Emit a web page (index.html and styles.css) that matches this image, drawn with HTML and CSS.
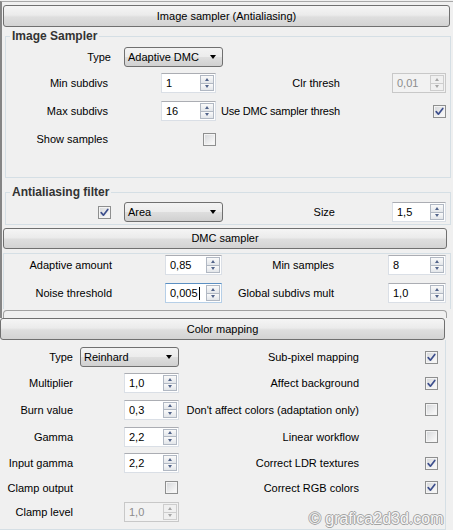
FILE: index.html
```html
<!DOCTYPE html>
<html>
<head>
<meta charset="utf-8">
<title>V-Ray rollouts</title>
<link rel="stylesheet" href="styles.css">
</head>
<body>
<div class="main">
  <div class="hdr h1">Image sampler (Antialiasing)</div>

  <fieldset class="grp g1">
    <legend>Image Sampler</legend>
    <div class="trow">
      <span class="tl">Type</span>
      <div class="dd"><span>Adaptive DMC</span><i class="dda"></i></div>
    </div>
    <div class="isgrid">
      <span class="la">Min subdivs</span>
      <div class="spin"><span class="v">1</span><span class="arr"><b class="up"></b><b class="dn"></b></span></div>
      <span class="lb">Clr thresh</span>
      <div class="spin dis"><span class="v">0,01</span><span class="arr"><b class="up"></b><b class="dn"></b></span></div>

      <span class="la">Max subdivs</span>
      <div class="spin"><span class="v">16</span><span class="arr"><b class="up"></b><b class="dn"></b></span></div>
      <span class="lb tight">Use DMC sampler thresh</span>
      <span class="cb on end"><svg viewBox="0 0 11 11"><path d="M2.2 5.6 L4.4 8.2 L8.8 2.4"/></svg></span>

      <span class="la">Show samples</span>
      <span class="cb end"></span>
    </div>
  </fieldset>

  <fieldset class="grp g2">
    <legend>Antialiasing filter</legend>
    <div class="aarow">
      <span class="cb on aacb"><svg viewBox="0 0 11 11"><path d="M2.2 5.6 L4.4 8.2 L8.8 2.4"/></svg></span>
      <div class="dd aadd"><span>Area</span><i class="dda"></i></div>
      <span class="aasz">Size</span>
      <div class="spin aasp"><span class="v">1,5</span><span class="arr"><b class="up"></b><b class="dn"></b></span></div>
    </div>
  </fieldset>

  <div class="hdr h2">DMC sampler</div>
  <div class="dmc">
    <div class="dgrid">
      <span class="la">Adaptive amount</span>
      <div class="spin"><span class="v">0,85</span><span class="arr"><b class="up"></b><b class="dn"></b></span></div>
      <span class="lb">Min samples</span>
      <div class="spin"><span class="v">8</span><span class="arr"><b class="up"></b><b class="dn"></b></span></div>

      <span class="la">Noise threshold</span>
      <div class="spin foc"><span class="v">0,005<i class="caret"></i></span><span class="arr"><b class="up"></b><b class="dn"></b></span></div>
      <span class="lb">Global subdivs mult</span>
      <div class="spin"><span class="v">1,0</span><span class="arr"><b class="up"></b><b class="dn"></b></span></div>
    </div>
  </div>
  <div class="edge"></div>
</div>

<div class="hdr h4">Color mapping</div>
<div class="cmp">
  <div class="cgrid">
    <span class="la">Type</span>
    <div class="dd"><span>Reinhard</span><i class="dda"></i></div>
    <span class="lb">Sub-pixel mapping</span>
    <span class="cb on"><svg viewBox="0 0 11 11"><path d="M2.2 5.6 L4.4 8.2 L8.8 2.4"/></svg></span>

    <span class="la">Multiplier</span>
    <div class="spin end"><span class="v">1,0</span><span class="arr"><b class="up"></b><b class="dn"></b></span></div>
    <span class="lb">Affect background</span>
    <span class="cb on"><svg viewBox="0 0 11 11"><path d="M2.2 5.6 L4.4 8.2 L8.8 2.4"/></svg></span>

    <span class="la">Burn value</span>
    <div class="spin end"><span class="v">0,3</span><span class="arr"><b class="up"></b><b class="dn"></b></span></div>
    <span class="lb">Don't affect colors (adaptation only)</span>
    <span class="cb"></span>

    <span class="la">Gamma</span>
    <div class="spin end"><span class="v">2,2</span><span class="arr"><b class="up"></b><b class="dn"></b></span></div>
    <span class="lb">Linear workflow</span>
    <span class="cb"></span>

    <span class="la">Input gamma</span>
    <div class="spin end"><span class="v">2,2</span><span class="arr"><b class="up"></b><b class="dn"></b></span></div>
    <span class="lb">Correct LDR textures</span>
    <span class="cb on"><svg viewBox="0 0 11 11"><path d="M2.2 5.6 L4.4 8.2 L8.8 2.4"/></svg></span>

    <span class="la">Clamp output</span>
    <span class="cb end cbm"></span>
    <span class="lb">Correct RGB colors</span>
    <span class="cb on"><svg viewBox="0 0 11 11"><path d="M2.2 5.6 L4.4 8.2 L8.8 2.4"/></svg></span>

    <span class="la">Clamp level</span>
    <div class="spin dis end"><span class="v">1,0</span><span class="arr"><b class="up"></b><b class="dn"></b></span></div>
  </div>
</div>
<div class="wm">© grafica2d3d.com</div>
</body>
</html>
```

FILE: styles.css
```css
* { box-sizing: border-box; }
html, body { margin: 0; padding: 0; background: #f0f0f0; }
body {
  font-family: "Liberation Sans", Arial, sans-serif;
  font-size: 11px;
  color: #000;
  width: 453px;
  height: 530px;
  overflow: hidden;
}

.main {
  border-left: 2px solid #858585;
  border-top: 1px solid #a8a8a8;
  margin-top: 1px;
  padding-top: 3px;
}

.hdr {
  height: 22px;
  border: 1px solid #707070;
  border-radius: 3px;
  background: linear-gradient(#f5f5f5, #ebebeb 45%, #dedede 55%, #d3d3d3);
  text-align: center;
  line-height: 20px;
  white-space: nowrap;
}
.h1 { margin-left: 1px; width: 447px; }
.h2 { margin: 3px 0 0 1px; width: 444px; height: 21px; line-height: 19px; }
.h4 { width: 445px; }

.grp {
  margin: 0 0 0 3px;
  padding: 0;
  width: 446px;
  min-width: 0;
  border: 1px solid #d5dfe5;
}
.grp legend {
  margin-left: 4px;
  padding: 0 2px;
  font-weight: bold;
  font-size: 12px;
  line-height: 13px;
  color: #333;
}
.g1 { margin-top: 3px; }
.g2 { margin-top: 8px; }

.trow {
  display: flex;
  align-items: center;
  height: 20px;
  margin-top: 4px;
}
.tl { width: 105px; text-align: right; margin-right: 13px; }

.isgrid {
  display: grid;
  grid-template-columns: 155px 55px 176px 54px;
  grid-template-rows: 20px 20px 20px;
  row-gap: 8px;
  align-items: center;
  margin: 6px 0 28px 0;
}
.isgrid .la { text-align: right; padding-right: 53px; white-space: nowrap; }
.isgrid .lb { text-align: right; padding-right: 52px; white-space: nowrap; }
.tight { letter-spacing: -0.2px; }

.aarow {
  display: flex;
  align-items: center;
  height: 20px;
  margin: 3px 0 2px 0;
}
.aacb { margin-left: 92px; }
.aadd { margin-left: 13px; }
.aasz { width: 112px; text-align: right; }
.aasp { margin-left: 57px; width: 54px; }

.dmc {
  margin: 4px 0 0 1px;
  width: 448px;
  border: 1px solid #d5dfe5;
  border-bottom: none;
  padding: 1px 0 6px 0;
}
.dgrid {
  display: grid;
  grid-template-columns: 161px 57px 166px 58px;
  grid-template-rows: 20px 20px;
  row-gap: 8px;
  align-items: center;
}
.dgrid .la { text-align: right; padding-right: 53px; white-space: nowrap; }
.dgrid .lb { text-align: right; padding-right: 54px; white-space: nowrap; }

.edge {
  margin: 1px 0 0 1px;
  width: 444px;
  height: 8px;
  border: 1px solid #a0a0a0;
  border-bottom: none;
  border-radius: 4px 4px 0 0;
}

.cmp {
  width: 446px;
  height: 190px;
  border-right: 1px solid #d5dfe5;
  border-bottom: 1px solid #d5dfe5;
  padding-top: 4px;
}
.cgrid {
  display: grid;
  grid-template-columns: 80px 99px 246px 13px;
  grid-template-rows: 26px 26px 27px 27px 26px 23px 26px;
  align-items: center;
}
.cgrid .la { text-align: right; padding-right: 7px; white-space: nowrap; }
.cgrid .lb { text-align: right; padding-right: 66px; white-space: nowrap; }
.cgrid .spin { width: 55px; }

/* controls */
.dd {
  width: 99px;
  height: 20px;
  border: 1px solid #707070;
  border-radius: 3px;
  background: linear-gradient(#f3f3f3, #ececec 48%, #dedede 52%, #d0d0d0);
  display: flex;
  align-items: center;
  padding: 0 6px 0 3px;
}
.dd span { flex: 1; white-space: nowrap; }
.dda {
  width: 0;
  height: 0;
  border-left: 3.5px solid transparent;
  border-right: 3.5px solid transparent;
  border-top: 4px solid #000;
}

.spin {
  display: flex;
  height: 20px;
  background: #fff;
  border: 1px solid #dadfe6;
  border-top-color: #abadb3;
}
.spin .v {
  flex: 1;
  padding-left: 4px;
  line-height: 18px;
  white-space: nowrap;
  display: flex;
  align-items: center;
}
.arr {
  width: 16px;
  display: flex;
  flex-direction: column;
  padding: 1px;
}
.arr b {
  flex: 1;
  border: 1px solid #b1b8c3;
  background: linear-gradient(#fafafa, #e3e6ea);
  display: flex;
  align-items: center;
  justify-content: center;
}
.arr b + b { border-top: none; }
.arr .up::after {
  content: "";
  border-left: 2.5px solid transparent;
  border-right: 2.5px solid transparent;
  border-bottom: 3px solid #52648a;
}
.arr .dn::after {
  content: "";
  border-left: 2.5px solid transparent;
  border-right: 2.5px solid transparent;
  border-top: 3px solid #52648a;
}
.spin.dis { background: #f2f2f2; border-color: #c8c8c8; }
.spin.dis .v { color: #8c8c8c; }
.spin.dis .arr b { border-color: #cdcdcd; background: #f0f0f0; }
.spin.dis .arr .up::after { border-bottom-color: #a6a6a6; }
.spin.dis .arr .dn::after { border-top-color: #a6a6a6; }
.spin.foc { border-color: #b6cfe7; border-top-color: #5b8fc2; }
.caret {
  display: inline-block;
  width: 1px;
  height: 13px;
  background: #000;
  margin-left: 1px;
}

.cb {
  width: 13px;
  height: 13px;
  border: 1px solid #8e8f8f;
  background: linear-gradient(135deg, #d4d6d9, #f6f6f6 80%);
  box-shadow: inset 0 0 0 1px #f4f4f4;
  display: flex;
  align-items: center;
  justify-content: center;
}
.cb svg { width: 11px; height: 11px; display: block; }
.cb path { fill: none; stroke: #3d4f8d; stroke-width: 1.7; stroke-linecap: round; stroke-linejoin: round; }
.end { justify-self: end; }
.cbm { margin-right: 1px; }

.wm {
  position: absolute;
  left: 309px;
  top: 509px;
  font-family: "Liberation Sans", Arial, sans-serif;
  font-size: 16px;
  line-height: 20px;
  color: #f6f6f6;
  text-shadow: 1px 0 #a3a3a3, -1px 0 #a3a3a3, 0 1px #a3a3a3, 0 -1px #a3a3a3;
  white-space: nowrap;
}
```
